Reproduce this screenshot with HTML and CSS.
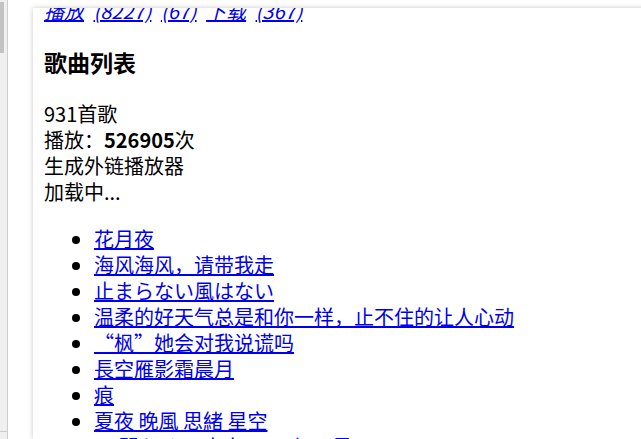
FILE: index.html
```html
<!DOCTYPE html>
<html lang="zh-CN">
<head>
    <meta charset="UTF-8">
    <meta name="viewport" content="width=device-width, initial-scale=1.0">
    <title>歌曲列表</title>
    <link rel="stylesheet" href="styles.css">
</head>
<body>
    <div class="window">
        <!-- 左侧滚动条 -->
        <div class="rail">
            <div class="thumb"></div>
            <div class="rail-end"></div>
        </div>
        <!-- 主面板 -->
        <div class="panel">
            <div class="content">
                <p class="links">
                    <a href="#">播放</a> <a href="#">(8227)</a> <a href="#">(67)</a> <a href="#">下载</a> <a href="#">(367)</a>
                </p>
                <h3>歌曲列表</h3>
                <div class="stats">
                    <div>931首歌</div>
                    <div>播放：<b>526905</b>次</div>
                    <div>生成外链播放器</div>
                    <div>加载中...</div>
                </div>
                <ul class="songs">
                    <li><a href="#">花月夜</a></li>
                    <li><a href="#">海风海风，请带我走</a></li>
                    <li><a href="#" lang="ja">止まらない風はない</a></li>
                    <li><a href="#">温柔的好天气总是和你一样，止不住的让人心动</a></li>
                    <li><a href="#">“枫”她会对我说谎吗</a></li>
                    <li><a href="#">長空雁影霜晨月</a></li>
                    <li><a href="#">痕</a></li>
                    <li><a href="#">夏夜 晚風 思緒 星空</a></li>
                    <li><a href="#">— 聞かせて 夜空に 一人の 星 —</a></li>
                    <li><a href="#">雨夜</a></li>
                </ul>
            </div>
        </div>
    </div>
</body>
</html>
```

FILE: styles.css
```css
/* 整体 */
body {
    margin: 0;
    background: #fff;
    font-family: "Noto Sans CJK SC", "Noto Sans", sans-serif;
    font-size: 20px;
    line-height: 26px;
    color: #000;
}
.window {
    display: flex;
    height: 439px;
    overflow: hidden;
}
/* 左侧滚动条 */
.rail {
    position: relative;
    width: 7px;
    flex: none;
    background: #f0f0f0;
    border-right: 1px solid #cdcdcd;
}
.thumb {
    position: absolute;
    left: 0;
    top: 2px;
    width: 4px;
    height: 51px;
    background: #c3c3c3;
}
.rail-end {
    position: absolute;
    left: 0;
    top: 431px;
    width: 7px;
    border-top: 1px solid #cdcdcd;
}
/* 主面板 */
.panel {
    flex: 1;
    margin: 8px -20px 0 25px;
    background: #fff;
    box-shadow: 0 0 5px rgba(0, 0, 0, 0.22);
    overflow: hidden;
}
.content {
    margin-top: -10px;
    padding-left: 11px;
}
a { color: #0000ee; }
.links {
    margin: 0;
    font-style: italic;
    word-spacing: 5px;
}
h3 {
    margin: 23px 0;
    font-size: 23px;
    line-height: 31px;
}
.songs {
    margin: 21px 0 0;
    padding-left: 50px;
}
```
